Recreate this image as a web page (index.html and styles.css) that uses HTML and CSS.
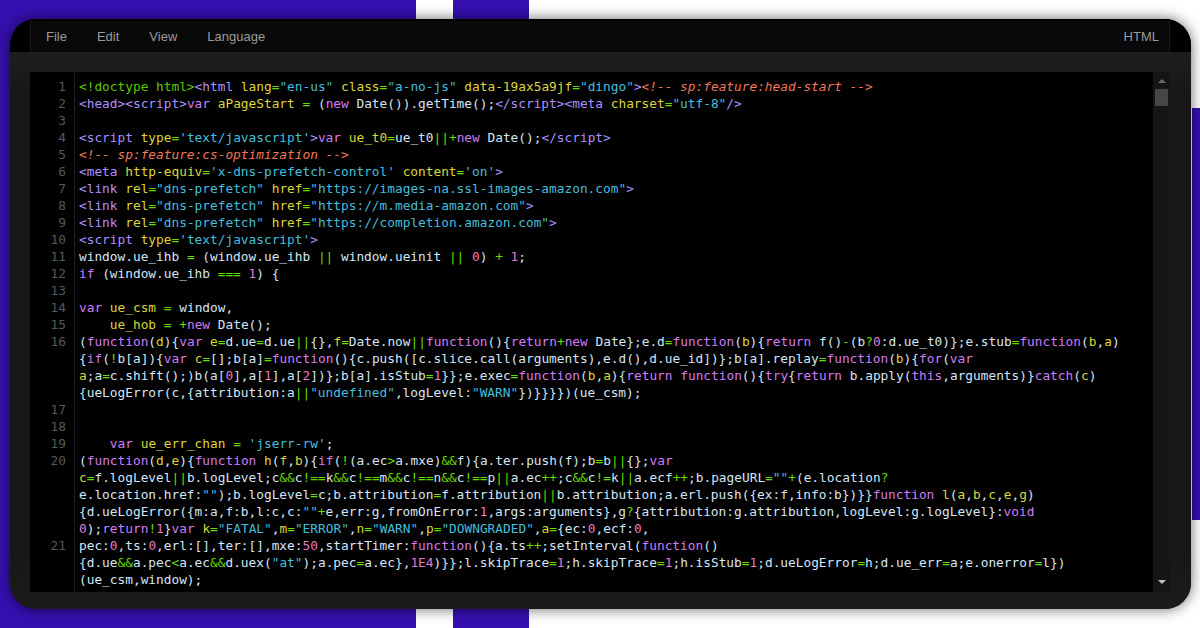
FILE: index.html
```html
<!DOCTYPE html>
<html lang="en">
<head>
<meta charset="utf-8">
<title>HTML source</title>
<link rel="stylesheet" href="styles.css">
</head>
<body>
<main class="window">
<header class="menubar">
<nav class="menu">
<span class="item">File</span>
<span class="item">Edit</span>
<span class="item">View</span>
<span class="item">Language</span>
<span class="mode">HTML</span>
</nav>
</header>
<section class="frame">
<div class="pane">
<pre class="gutter">1
2
3
4
5
6
7
8
9
10
11
12
13
14
15
16



17
18
19
20




21</pre>
<pre class="code"><span class="d">&lt;!doctype html&gt;</span><span class="t">&lt;html</span> <span class="a">lang</span><span class="o">=</span><span class="s">"en-us"</span> <span class="a">class</span><span class="o">=</span><span class="s">"a-no-js"</span> <span class="a">data-19ax5a9jf</span><span class="o">=</span><span class="s">"dingo"</span><span class="t">&gt;</span><span class="c">&lt;!-- sp:feature:head-start --&gt;</span>
<span class="t">&lt;head&gt;&lt;script&gt;</span><span class="k">var</span> <span class="a">aPageStart</span> <span class="o">=</span> (<span class="k">new</span> Date()).getTime();<span class="t">&lt;/script&gt;&lt;meta</span> <span class="a">charset</span><span class="o">=</span><span class="s">"utf-8"</span><span class="t">/&gt;</span>

<span class="t">&lt;script</span> <span class="a">type</span><span class="o">=</span><span class="s">'text/javascript'</span><span class="t">&gt;</span><span class="k">var</span> <span class="a">ue_t0</span><span class="o">=</span>ue_t0<span class="o">||+</span><span class="k">new</span> Date();<span class="t">&lt;/script&gt;</span>
<span class="c">&lt;!-- sp:feature:cs-optimization --&gt;</span>
<span class="t">&lt;meta</span> <span class="a">http-equiv</span><span class="o">=</span><span class="s">'x-dns-prefetch-control'</span> <span class="a">content</span><span class="o">=</span><span class="s">'on'</span><span class="t">&gt;</span>
<span class="t">&lt;link</span> <span class="a">rel</span><span class="o">=</span><span class="s">"dns-prefetch"</span> <span class="a">href</span><span class="o">=</span><span class="s">"https://images-na.ssl-images-amazon.com"</span><span class="t">&gt;</span>
<span class="t">&lt;link</span> <span class="a">rel</span><span class="o">=</span><span class="s">"dns-prefetch"</span> <span class="a">href</span><span class="o">=</span><span class="s">"https://m.media-amazon.com"</span><span class="t">&gt;</span>
<span class="t">&lt;link</span> <span class="a">rel</span><span class="o">=</span><span class="s">"dns-prefetch"</span> <span class="a">href</span><span class="o">=</span><span class="s">"https://completion.amazon.com"</span><span class="t">&gt;</span>
<span class="t">&lt;script</span> <span class="a">type</span><span class="o">=</span><span class="s">'text/javascript'</span><span class="t">&gt;</span>
window.ue_ihb <span class="o">=</span> (window.ue_ihb <span class="o">||</span> window.ueinit <span class="o">||</span> <span class="n">0</span>) <span class="o">+</span> <span class="n">1</span>;
<span class="k">if</span> (window.ue_ihb <span class="o">===</span> <span class="n">1</span>) {

<span class="k">var</span> <span class="a">ue_csm</span> <span class="o">=</span> window,
    <span class="a">ue_hob</span> <span class="o">=</span> <span class="o">+</span><span class="k">new</span> Date();
(<span class="k">function</span>(<span class="a">d</span>){<span class="k">var</span> <span class="a">e</span><span class="o">=</span>d.ue<span class="o">=</span>d.ue<span class="o">||</span>{},<span class="a">f</span><span class="o">=</span>Date.now<span class="o">||</span><span class="k">function</span>(){<span class="k">return</span><span class="o">+</span><span class="k">new</span> Date};e.d<span class="o">=</span><span class="k">function</span>(<span class="a">b</span>){<span class="k">return</span> f()<span class="o">-</span>(b<span class="o">?</span><span class="n">0</span>:d.ue_t0)};e.stub<span class="o">=</span><span class="k">function</span>(<span class="a">b</span>,<span class="a">a</span>)
{<span class="k">if</span>(<span class="o">!</span>b[a]){<span class="k">var</span> <span class="a">c</span><span class="o">=</span>[];b[a]<span class="o">=</span><span class="k">function</span>(){c.push([c.slice.call(arguments),e.d(),d.ue_id])};b[a].replay<span class="o">=</span><span class="k">function</span>(<span class="a">b</span>){<span class="k">for</span>(<span class="k">var</span>
<span class="a">a</span>;a<span class="o">=</span>c.shift();)b(a[<span class="n">0</span>],a[<span class="n">1</span>],a[<span class="n">2</span>])};b[a].isStub<span class="o">=</span><span class="n">1</span>}};e.exec<span class="o">=</span><span class="k">function</span>(<span class="a">b</span>,<span class="a">a</span>){<span class="k">return</span> <span class="k">function</span>(){<span class="k">try</span>{<span class="k">return</span> b.apply(<span class="k">this</span>,arguments)}<span class="k">catch</span>(<span class="a">c</span>)
{ueLogError(c,{attribution:a<span class="o">||</span><span class="s">"undefined"</span>,logLevel:<span class="s">"WARN"</span>})}}}})(ue_csm);


    <span class="k">var</span> <span class="a">ue_err_chan</span> <span class="o">=</span> <span class="s">'jserr-rw'</span>;
(<span class="k">function</span>(<span class="a">d</span>,<span class="a">e</span>){<span class="k">function</span> <span class="a">h</span>(<span class="a">f</span>,<span class="a">b</span>){<span class="k">if</span>(<span class="o">!</span>(a.ec<span class="o">&gt;</span>a.mxe)<span class="o">&amp;&amp;</span>f){a.ter.push(f);b<span class="o">=</span>b<span class="o">||</span>{};<span class="k">var</span>
<span class="a">c</span><span class="o">=</span>f.logLevel<span class="o">||</span>b.logLevel;c<span class="o">&amp;&amp;</span>c<span class="o">!==</span>k<span class="o">&amp;&amp;</span>c<span class="o">!==</span>m<span class="o">&amp;&amp;</span>c<span class="o">!==</span>n<span class="o">&amp;&amp;</span>c<span class="o">!==</span>p<span class="o">||</span>a.ec<span class="o">++</span>;c<span class="o">&amp;&amp;</span>c<span class="o">!=</span>k<span class="o">||</span>a.ecf<span class="o">++</span>;b.pageURL<span class="o">=</span><span class="s">""</span><span class="o">+</span>(e.location<span class="o">?</span>
e.location.href:<span class="s">""</span>);b.logLevel<span class="o">=</span>c;b.attribution<span class="o">=</span>f.attribution<span class="o">||</span>b.attribution;a.erl.push({ex:f,info:b})}}<span class="k">function</span> <span class="a">l</span>(<span class="a">a</span>,<span class="a">b</span>,<span class="a">c</span>,<span class="a">e</span>,<span class="a">g</span>)
{d.ueLogError({m:a,f:b,l:c,c:<span class="s">""</span><span class="o">+</span>e,err:g,fromOnError:<span class="n">1</span>,args:arguments},g<span class="o">?</span>{attribution:g.attribution,logLevel:g.logLevel}:<span class="k">void</span>
<span class="n">0</span>);<span class="k">return</span><span class="o">!</span><span class="n">1</span>}<span class="k">var</span> <span class="a">k</span><span class="o">=</span><span class="s">"FATAL"</span>,<span class="a">m</span><span class="o">=</span><span class="s">"ERROR"</span>,<span class="a">n</span><span class="o">=</span><span class="s">"WARN"</span>,<span class="a">p</span><span class="o">=</span><span class="s">"DOWNGRADED"</span>,<span class="a">a</span><span class="o">=</span>{ec:<span class="n">0</span>,ecf:<span class="n">0</span>,
pec:<span class="n">0</span>,ts:<span class="n">0</span>,erl:[],ter:[],mxe:<span class="n">50</span>,startTimer:<span class="k">function</span>(){a.ts<span class="o">++</span>;setInterval(<span class="k">function</span>()
{d.ue<span class="o">&amp;&amp;</span>a.pec<span class="o">&lt;</span>a.ec<span class="o">&amp;&amp;</span>d.uex(<span class="s">"at"</span>);a.pec<span class="o">=</span>a.ec},<span class="n">1E4</span>)}};l.skipTrace<span class="o">=</span><span class="n">1</span>;h.skipTrace<span class="o">=</span><span class="n">1</span>;h.isStub<span class="o">=</span><span class="n">1</span>;d.ueLogError<span class="o">=</span>h;d.ue_err<span class="o">=</span>a;e.onerror<span class="o">=</span>l})
(ue_csm,window);</pre>
<aside class="scrollbar">
<span class="arrow-up"></span>
<span class="thumb"></span>
<span class="arrow-down"></span>
</aside>
</div>
</section>
</main>
</body>
</html>
```
FILE: styles.css
```css
* { box-sizing: border-box; }

html, body { height: 100%; }

body {
  margin: 0;
  overflow: hidden;
  padding: 19px 9px 19px 10px;
  background:
    linear-gradient(#360fb0, #360fb0) 1192px 108px / 8px 412px no-repeat,
    linear-gradient(90deg,
      #360fb0 0, #360fb0 416px,
      #fff 416px, #fff 453px,
      #360fb0 453px, #360fb0 529px,
      #fff 529px);
}

.window {
  display: flex;
  flex-direction: column;
  height: 590px;
  border-radius: 26px;
  overflow: hidden;
  background: #1a1a1a;
  box-shadow: 0 0 14px rgba(0, 0, 0, .6);
}

.menubar {
  flex: none;
  height: 33px;
  padding: 0 21px 0 20px;
  background: #000;
}

.menu {
  display: flex;
  align-items: center;
  gap: 30px;
  height: 100%;
  padding: 0 10px 0 15px;
  background: #090909;
  border-left: 1px solid #1c1c1c;
  border-right: 1px solid #1c1c1c;
  border-top: 2px solid #000;
  font: 13px "Liberation Sans", Arial, sans-serif;
  color: #9a9a9a;
}

.mode { margin-left: auto; }

.frame {
  flex: 1;
  min-height: 0;
  padding: 20px 21px 17px 20px;
  background: linear-gradient(#1f1f1f, #171717 40px, #171717 500px, #1b1b1b);
}

.pane {
  display: flex;
  height: 520px;
  background: #000;
  font: 12.8px/17px "DejaVu Sans Mono", "Liberation Mono", monospace;
}

.gutter, .code {
  margin: 0;
  padding-top: 6px;
  font: inherit;
}

.gutter {
  flex: none;
  width: 45px;
  padding-right: 8px;
  text-align: right;
  color: #585858;
  border-right: 1px solid #1f1f1f;
}

.code {
  flex: 1;
  min-width: 0;
  padding-left: 4px;
  overflow: hidden;
  color: #d4e6f7;
}

.t { color: #ad90ff; }
.d { color: #5cc800; }
.a { color: #dcd63c; }
.o { color: #66dc00; }
.s { color: #45bede; }
.k { color: #d07cf4; }
.n { color: #e67ac8; }
.c { color: #f0775a; font-style: italic; }

.scrollbar {
  flex: none;
  display: flex;
  flex-direction: column;
  align-items: center;
  width: 17px;
  padding: 7px 0 8px;
  background: #151515;
}

.arrow-up, .arrow-down {
  width: 0;
  height: 0;
  border-left: 4px solid transparent;
  border-right: 4px solid transparent;
}

.arrow-up { border-bottom: 4px solid #6c6c6c; }

.thumb {
  width: 13px;
  height: 17px;
  margin-top: 6px;
  background: #464646;
}

.arrow-down {
  margin-top: auto;
  border-top: 4px solid #c0c0c0;
}
```
